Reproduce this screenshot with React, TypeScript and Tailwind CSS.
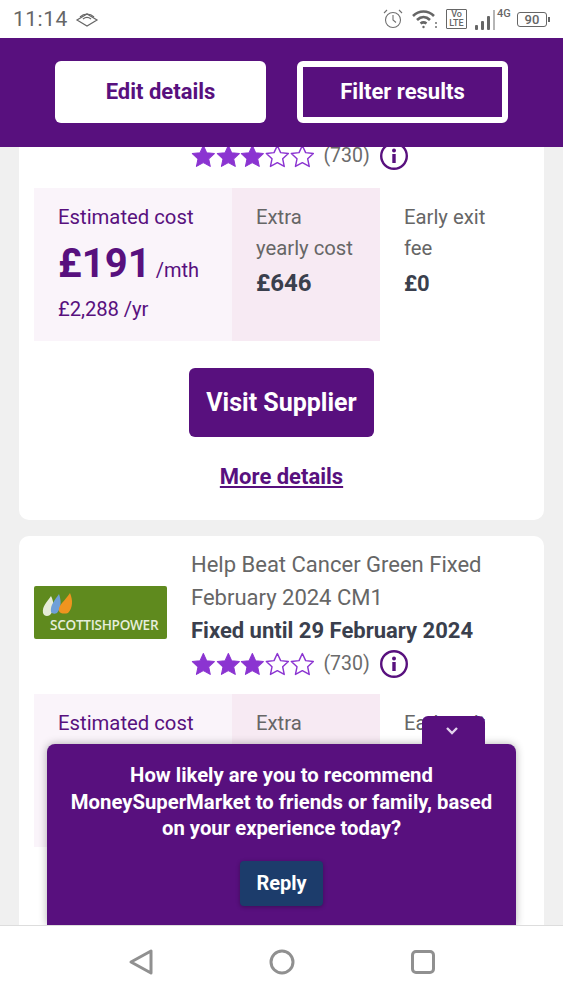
import React from 'react';

const purple = 'text-[#58107e]';

function Star({ filled }: { filled: boolean }) {
  return (
    <svg width="24.700" height="24.700" viewBox="0 0 24 24" className="flex-shrink-0">
      <path
        d="M12 1.500l3.200 6.900 7.500.9-5.500 5.100 1.500 7.400L12 18.100l-6.700 3.700 1.500-7.400L1.300 9.300l7.500-.9z"
        fill={filled ? '#8b34d1' : 'none'}
        stroke="#8b34d1"
        strokeWidth={filled ? 1 : 1.400}
        strokeLinejoin="round"
      />
    </svg>
  );
}

function Rating() {
  return (
    <div className="flex items-center h-[30px]">
      {[true, true, true, false, false].map((filled, i) => (
        <Star key={i} filled={filled} />
      ))}
      <span className="text-[19.500px] text-[#6b6b6b] ml-[9px]">(730)</span>
      <svg width="30" height="30" viewBox="0 0 30 30" className="ml-[9px]">
        <circle cx="15" cy="15" r="12.800" fill="none" stroke="#58107e" strokeWidth="2.400" />
        <circle cx="15" cy="9.500" r="2" fill="#58107e" />
        <rect x="13.300" y="13" width="3.400" height="9" fill="#58107e" />
      </svg>
    </div>
  );
}

function CostTable() {
  return (
    <div className="flex h-[153px] text-[20.300px] leading-[31px]">
      <div className="w-[198px] bg-[#faf4fa] pl-[24px] pt-[14px] text-[#58107e]">
        <div>Estimated cost</div>
        <div className="flex items-baseline mt-[7px] leading-[48px]">
          <span className="text-[40px] font-bold">£191</span>
          <span className="ml-[5px] text-[20px]">/mth</span>
        </div>
        <div className="tracking-[-0.1px]">£2,288 /yr</div>
      </div>
      <div className="w-[148px] bg-[#f7eaf3] pl-[24px] pt-[14px] text-[#666666]">
        <div>Extra</div>
        <div>yearly cost</div>
        <div className="text-[24px] font-bold text-[#3a3f4d] mt-[4px]">£646</div>
      </div>
      <div className="pl-[24px] pt-[14px] text-[#666666]">
        <div>Early exit</div>
        <div>fee</div>
        <div className="text-[22px] font-bold text-[#3a3f4d] mt-[4px]">£0</div>
      </div>
    </div>
  );
}

function ScottishPowerLogo() {
  return (
    <div className="w-[133px] h-[53px] bg-[#5f8a1e] rounded-[2px] flex-shrink-0 flex flex-col pl-[8px] pt-[7px] mt-[50px]">
      <svg width="32" height="25" viewBox="0 0 32 25">
        <path d="M1 20C0 13 5 9 9 3c3 6 4 14-1 19-3 2-6 1-7-2z" fill="#e6ecd8" />
        <path d="M9 19C8 12 13 7 17 1c2 6 3 13-2 19-2 1-5 1-6-1z" fill="#6f9fd8" />
        <path d="M17 18c-1-6 6-10 11-18 3 7 3 15-2 20-3 1-8 1-9-2z" fill="#ef941f" />
      </svg>
      <span className="text-[13.600px] leading-[14px] ml-[8px] tracking-[-0.3px] text-[#e6eedb] font-['Open_Sans',sans-serif] font-semibold">
        SCOTTISHPOWER
      </span>
    </div>
  );
}

export default function App() {
  return (
    <div className="relative w-[563px] h-[1000px] overflow-hidden flex flex-col bg-white font-['Roboto',sans-serif]">
      {/* status bar */}
      <div className="h-[38px] flex items-center pl-[13px] pr-[13px] flex-shrink-0 text-[#666666]">
        <span className="text-[21px] leading-none tracking-[0.5px]">11:14</span>
        <svg width="24" height="16" viewBox="0 0 24 16" className="ml-[7px]" fill="none" stroke="#666666" strokeWidth="1.200">
          <path d="M2 9l10 6 10-6-10-6z" />
          <path d="M5 6c4-4 10-4 14 0M8 8c2.500-2 5.500-2 8 0" />
        </svg>
        <div className="flex-1" />
        <svg width="22" height="22" viewBox="0 0 22 22" fill="none" stroke="#707070" strokeWidth="1.100">
          <circle cx="11" cy="12" r="7.500" />
          <path d="M11 7v5l3 2.500M2 5l3-3M20 5l-3-3" />
        </svg>
        <svg width="26" height="20" viewBox="0 0 26 20" className="ml-[8px]" fill="none" stroke="#666666" strokeWidth="2.600">
          <path d="M1 7c6-6 15-6 21 0M5 11c4-4 9-4 13 0M8.500 14.500c2-1.500 4-1.500 6 0" />
          <circle cx="11.500" cy="18" r="1.200" fill="#666666" stroke="none" />
          <path d="M24 13v2M24 17v2" strokeWidth="1.400" />
        </svg>
        <div className="ml-[8px] w-[21px] h-[20px] border border-[#666666] rounded-[1px] flex flex-col items-center justify-center text-[9px] leading-[9px] font-medium text-[#666666]">
          <span>Vo</span>
          <span>LTE</span>
        </div>
        <div className="ml-[8px] flex items-end gap-[3px] h-[20px] mt-[1px]">
          <div className="w-[3px] h-[5px] bg-[#666666] rounded-[1px]" />
          <div className="w-[3px] h-[9px] bg-[#666666] rounded-[1px]" />
          <div className="w-[3px] h-[14px] bg-[#666666] rounded-[1px]" />
          <div className="w-[2px] h-[20px] bg-[#b5b5b5]" />
        </div>
        <span className="text-[11px] font-medium self-start mt-[8px] ml-[2px] w-[14px] leading-none">4G</span>
        <div className="ml-[6px] w-[30px] h-[15px] border border-[#666666] rounded-[3px] flex items-center justify-center text-[13px] font-medium leading-none">
          90
        </div>
        <div className="w-[2px] h-[5px] bg-[#666666] ml-[1px]" />
      </div>

      {/* header */}
      <div className="relative z-10 h-[109px] flex-shrink-0 bg-[#58107e] flex items-center justify-center gap-[31px] pb-[1px]">
        <button className={`w-[211px] h-[62px] pb-[2px] rounded-[6px] bg-white text-[22px] font-bold ${purple}`}>
          Edit details
        </button>
        <button className="w-[211px] h-[62px] pb-[2px] rounded-[6px] border-[6px] border-white bg-[#58107e] text-[22px] font-bold text-white">
          Filter results
        </button>
      </div>

      {/* results */}
      <div className="flex-1 min-h-0 overflow-hidden bg-[#f0f0f0] px-[19px]">
        <div className="-mt-[6px] bg-white rounded-b-[10px] h-[379px] px-[15px] flex flex-col">
          <div className="pl-[157px]">
            <Rating />
          </div>
          <div className="mt-[17px]">
            <CostTable />
          </div>
          <button className="self-center mt-[27px] w-[185px] h-[69px] rounded-[6px] bg-[#58107e] text-white text-[25px] font-bold">
            Visit Supplier
          </button>
          <a className={`self-center mt-[23px] text-[22px] font-bold underline ${purple}`}>More details</a>
        </div>

        <div className="mt-[16px] bg-white rounded-[10px] h-[500px] px-[15px]">
          <div className="flex gap-[24px]">
            <ScottishPowerLogo />
            <div className="pt-[12px]">
              <div className="text-[22px] leading-[33px] text-[#666666]">
                Help Beat Cancer Green Fixed
                <br />
                February 2024 CM1
              </div>
              <div className="text-[22px] leading-[33px] font-bold text-[#3a3f4d]">Fixed until 29 February 2024</div>
              <div className="mt-[2px]">
                <Rating />
              </div>
            </div>
          </div>
          <div className="mt-[15px]">
            <CostTable />
          </div>
        </div>
      </div>

      {/* survey popup */}
      <div className="absolute z-20 left-[47px] top-[744px] w-[469px] h-[181px] bg-[#58107e] rounded-t-[8px] shadow-[0_0_8px_rgba(0,0,0,0.3)] flex flex-col items-center pt-[18px]">
        <div className="absolute right-[31px] -top-[28px] w-[63px] h-[29px] bg-[#58107e] rounded-t-[6px] flex items-center justify-center pr-[3px]">
          <svg width="14" height="10" viewBox="0 0 14 10" fill="none" stroke="#e3d3ee" strokeWidth="2.400">
            <path d="M2 2l5 5 5-5" />
          </svg>
        </div>
        <p className="text-[20.300px] leading-[26.500px] font-bold text-white text-center">
          How likely are you to recommend
          <br />
          MoneySuperMarket to friends or family, based
          <br />
          on your experience today?
        </p>
        <button className="mt-[19px] w-[83px] h-[45px] rounded-[4px] bg-[#1c3c6b] shadow-[0_1px_4px_rgba(0,0,0,0.3)] text-white text-[20px] font-bold">
          Reply
        </button>
      </div>

      {/* android nav */}
      <div className="relative z-30 h-[75px] flex-shrink-0 bg-white border-t border-[#dddddd] flex items-start pt-[22px] pl-[127px] gap-[113px]">
        <svg width="28" height="28" viewBox="0 0 28 28" fill="none" stroke="#909090" strokeWidth="3" strokeLinejoin="round">
          <path d="M24 3v22L4 14z" />
        </svg>
        <svg width="28" height="28" viewBox="0 0 28 28" fill="none" stroke="#909090" strokeWidth="3">
          <circle cx="14" cy="14" r="11" />
        </svg>
        <svg width="28" height="28" viewBox="0 0 28 28" fill="none" stroke="#909090" strokeWidth="3">
          <rect x="3.500" y="3.500" width="21" height="21" rx="3.500" />
        </svg>
      </div>
    </div>
  );
}
